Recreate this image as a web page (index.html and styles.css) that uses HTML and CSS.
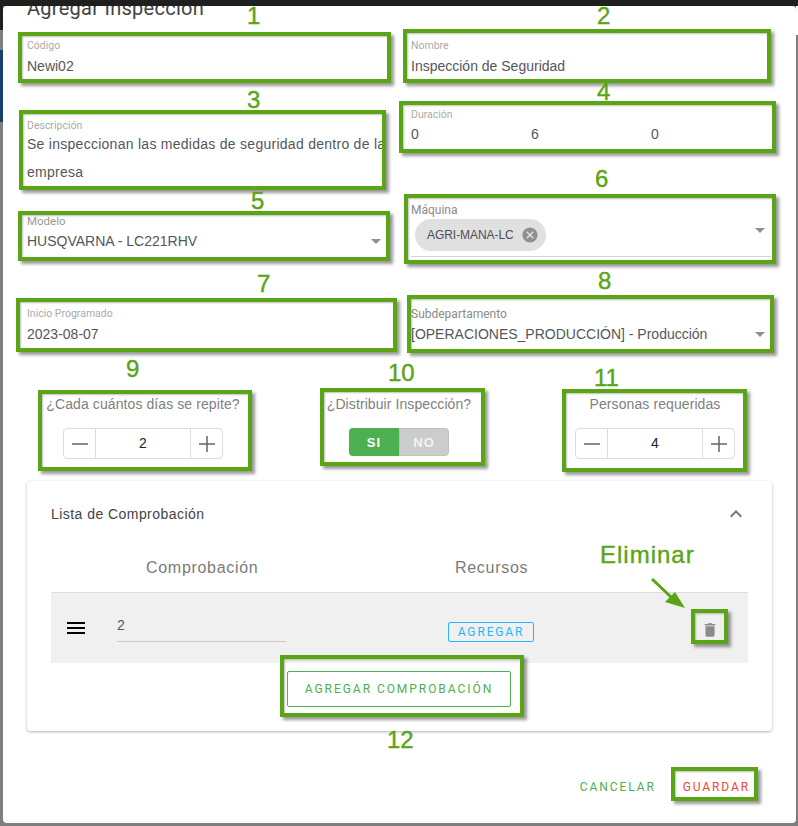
FILE: index.html
```html
<!DOCTYPE html>
<html>
<head>
    <title>Agregar Inspección</title>
    <link rel="stylesheet" href="styles.css">
</head>
<body>
    <div class="page-dark"></div>
    <div class="page-blue"></div>
    <div class="scroll-track"></div>
    <div class="dialog">
        <h2 class="dialog-title">Agregar Inspección</h2>
        <div class="form-cols">
            <div class="form-col">
                <div class="field h-code">
                    <label>Código</label>
                    <div class="value">Newi02</div>
                </div>
                <div class="field h-desc">
                    <label>Descripción</label>
                    <div class="value value-multi">Se inspeccionan las medidas de seguridad dentro de la empresa</div>
                </div>
                <div class="field h-model">
                    <label class="label-mid">Modelo</label>
                    <div class="value">HUSQVARNA - LC221RHV<span class="caret caret-abs"></span></div>
                </div>
                <div class="field h-date">
                    <label>Inicio Programado</label>
                    <div class="value">2023-08-07</div>
                </div>
            </div>
            <div class="form-col">
                <div class="field h-name">
                    <label>Nombre</label>
                    <div class="value">Inspección de Seguridad</div>
                </div>
                <div class="field h-duration">
                    <label>Duración</label>
                    <div class="duration-row">
                        <div class="value">0</div>
                        <div class="value">6</div>
                        <div class="value">0</div>
                    </div>
                </div>
                <div class="field h-machine">
                    <label class="label-dark">Máquina</label>
                    <div class="machine-row">
                        <div class="chip">
                            <span>AGRI-MANA-LC</span>
                            <svg class="chip-close" viewBox="0 0 24 24"><path d="M12 2C6.47 2 2 6.47 2 12s4.47 10 10 10 10-4.47 10-10S17.53 2 12 2zm5 13.59L15.59 17 12 13.41 8.41 17 7 15.59 10.59 12 7 8.41 8.41 7 12 10.59 15.59 7 17 8.41 13.41 12 17 15.59z"/></svg>
                        </div>
                        <span class="caret caret-machine"></span>
                    </div>
                </div>
                <div class="field h-date">
                    <label class="label-dark">Subdepartamento</label>
                    <div class="value">[OPERACIONES_PRODUCCIÓN] - Producción<span class="caret caret-abs"></span></div>
                </div>
            </div>
        </div>

        <div class="controls-row">
            <div class="control">
                <div class="control-title">¿Cada cuántos días se repite?</div>
                <div class="stepper">
                    <span class="step-btn"><svg viewBox="0 0 18 18"><path d="M1 9h16"/></svg></span>
                    <span class="step-value">2</span>
                    <span class="step-btn"><svg viewBox="0 0 18 18"><path d="M1 9h16M9 1v16"/></svg></span>
                </div>
            </div>
            <div class="control">
                <div class="control-title">¿Distribuir Inspección?</div>
                <div class="toggle">
                    <span class="toggle-on">SI</span>
                    <span class="toggle-off">NO</span>
                </div>
            </div>
            <div class="control">
                <div class="control-title">Personas requeridas</div>
                <div class="stepper">
                    <span class="step-btn"><svg viewBox="0 0 18 18"><path d="M1 9h16"/></svg></span>
                    <span class="step-value">4</span>
                    <span class="step-btn"><svg viewBox="0 0 18 18"><path d="M1 9h16M9 1v16"/></svg></span>
                </div>
            </div>
        </div>

        <div class="panel">
            <div class="panel-header">
                <span>Lista de Comprobación</span>
                <svg class="chevron" viewBox="0 0 24 24"><path d="M12 8l-6 6 1.41 1.41L12 10.83l4.59 4.58L18 14z"/></svg>
            </div>
            <div class="table-head">
                <span class="col-check">Comprobación</span>
                <span>Recursos</span>
            </div>
            <div class="table-row">
                <svg class="drag-icon" viewBox="0 0 18 14"><path d="M0 1h18v2H0zM0 6h18v2H0zM0 11h18v2H0z"/></svg>
                <div class="row-input">2</div>
                <span class="btn-add">AGREGAR</span>
                <svg class="trash-icon" viewBox="0 0 24 24"><path d="M6 19c0 1.1.9 2 2 2h8c1.1 0 2-.9 2-2V7H6v12zM19 4h-3.5l-1-1h-5l-1 1H5v2h14V4z"/></svg>
            </div>
            <div class="panel-footer">
                <span class="btn-outline">AGREGAR COMPROBACIÓN</span>
            </div>
        </div>

        <div class="dialog-actions">
            <span class="action-cancel">CANCELAR</span>
            <span class="action-save">GUARDAR</span>
        </div>
    </div>

    <!-- annotations drawn over the screenshot -->
    <div class="mark mark-1"></div>
    <div class="mark mark-2"></div>
    <div class="mark mark-3"></div>
    <div class="mark mark-4"></div>
    <div class="mark mark-5"></div>
    <div class="mark mark-6"></div>
    <div class="mark mark-7"></div>
    <div class="mark mark-8"></div>
    <div class="mark mark-9"></div>
    <div class="mark mark-10"></div>
    <div class="mark mark-11"></div>
    <div class="mark mark-12"></div>
    <div class="mark mark-del"></div>
    <div class="mark mark-save"></div>

    <span class="num num-1">1</span>
    <span class="num num-2">2</span>
    <span class="num num-3">3</span>
    <span class="num num-4">4</span>
    <span class="num num-5">5</span>
    <span class="num num-6">6</span>
    <span class="num num-7">7</span>
    <span class="num num-8">8</span>
    <span class="num num-9">9</span>
    <span class="num num-10">10</span>
    <span class="num num-11">11</span>
    <span class="num num-12">12</span>
    <span class="num num-del">Eliminar</span>
    <svg class="arrow" viewBox="0 0 40 36"><path d="M2 1L21 19"/><path class="arrow-head" d="M35 30L15 24L25 14z"/></svg>
</body>
</html>
```

FILE: styles.css
```css
* {
    box-sizing: border-box;
}
html, body {
    height: 100%;
}
body {
    margin: 0;
    padding: 6px 2px 3px 3px;
    background-color: #7f7f7f;
    font-family: "Liberation Sans", Arial, sans-serif;
    overflow: hidden;
}
.page-dark {
    position: absolute;
    left: 0;
    top: 0;
    right: 0;
    height: 6px;
    background-color: #1f1f1f;
}
.page-dark::after {
    content: "";
    position: absolute;
    left: 0;
    top: 6px;
    width: 3px;
    height: 24px;
    background-color: #1f1f1f;
}
.page-blue {
    position: absolute;
    left: 0;
    top: 50px;
    width: 3px;
    height: 72px;
    background-color: #17406e;
}
.scroll-track {
    position: absolute;
    right: 0;
    top: 6px;
    width: 2px;
    height: 29px;
    background-color: #fff;
}
.dialog {
    height: 100%;
    background-color: #fff;
    border-radius: 4px;
    padding: 0 25px 0 24px;
    overflow: hidden;
}
.dialog-title {
    margin: -10px 0 0;
    font-family: Roboto, Arial, sans-serif;
    font-size: 20px;
    font-weight: 400;
    line-height: 24px;
    color: #444;
    letter-spacing: .27px;
}
.form-cols {
    display: flex;
    gap: 24px;
    margin-top: 19px;
}
.form-col {
    width: 360px;
}
.field {
    overflow: hidden;
}
.h-code { height: 80px; }
.h-desc { height: 95px; }
.h-model { height: 93px; }
.h-date { height: 87px; }
.h-name { height: 69px; }
.h-duration { height: 95px; }
.h-machine { height: 104px; }
label {
    display: block;
    padding-top: 1px;
    font-family: Roboto, Arial, sans-serif;
    font-size: 10.5px;
    line-height: 12px;
    color: #aaa;
}
.label-mid {
    margin-bottom: 1px;
    font-size: 11.5px;
    color: #999;
}
.label-dark {
    font-size: 12px;
    color: #8a8a8a;
}
.value {
    position: relative;
    margin-top: 4px;
    font-size: 14px;
    line-height: 20px;
    color: #53575c;
}
.value-multi {
    margin-top: -2px;
    line-height: 28px;
    letter-spacing: .27px;
}
.duration-row {
    display: grid;
    grid-template-columns: repeat(3, 120px);
}
.duration-row .value {
    margin-top: 3px;
}
.caret {
    width: 0;
    height: 0;
    border-left: 5px solid transparent;
    border-right: 5px solid transparent;
    border-top: 5px solid #8f8f8f;
}
.caret-abs {
    position: absolute;
    right: 6px;
    top: 8px;
}
.machine-row {
    display: flex;
    justify-content: space-between;
    height: 40px;
    margin-top: 1px;
    padding: 2px 6px 0 4px;
    border-bottom: 1px solid #d5d5d5;
}
.caret-machine {
    margin-top: 9px;
}
.chip {
    display: flex;
    align-items: center;
    height: 32px;
    padding: 0 7px 0 12px;
    gap: 7px;
    background-color: #e0e0e0;
    border-radius: 16px;
    font-size: 12px;
    letter-spacing: -.05px;
    color: #4a4f55;
}
.chip-close {
    width: 18px;
    height: 18px;
    fill: #909090;
}
.controls-row {
    display: grid;
    grid-template-columns: repeat(3, 1fr);
    margin: 0 -12px;
}
.control {
    display: flex;
    flex-direction: column;
    align-items: center;
    height: 65px;
}
.control-title {
    font-size: 14px;
    line-height: 20px;
    color: #808080;
    letter-spacing: .09px;
}
.stepper {
    display: flex;
    width: 160px;
    height: 31px;
    margin-top: 14px;
    border: 1px solid #ddd;
    border-radius: 4px;
}
.step-btn {
    display: flex;
    align-items: center;
    justify-content: center;
    width: 31px;
}
.step-btn svg {
    width: 18px;
    height: 18px;
    fill: none;
    stroke: #666;
    stroke-width: 1.5;
}
.step-value {
    flex: 1;
    text-align: center;
    border-left: 1px solid #ddd;
    border-right: 1px solid #ddd;
    font-size: 14px;
    line-height: 29px;
    color: #222;
}
.toggle {
    display: flex;
    margin-top: 14px;
    font-size: 13px;
    font-weight: 700;
    letter-spacing: 1px;
    color: #fff;
}
.toggle span {
    display: flex;
    align-items: center;
    justify-content: center;
    width: 50px;
    height: 28px;
}
.toggle-on {
    background-color: #4caf50;
    border-radius: 4px 0 0 4px;
}
.toggle-off {
    background-color: #ccc;
    color: #f2f2f2;
    border-radius: 0 4px 4px 0;
    border: 1px solid #c0c0c0;
}
.panel {
    height: 250px;
    margin: 22px -1px 0 0;
    padding: 0 24px;
    background-color: #fff;
    border-radius: 4px;
    box-shadow: 0 1px 3px rgba(0, 0, 0, .3);
}
.panel-header {
    display: flex;
    align-items: center;
    justify-content: space-between;
    height: 64px;
    padding-top: 2px;
    font-size: 14px;
    letter-spacing: .45px;
    color: #444;
}
.chevron {
    width: 24px;
    height: 24px;
    fill: #777;
}
.table-head {
    display: flex;
    height: 47px;
    padding: 13px 0 0 95px;
    font-size: 16px;
    line-height: 19px;
    color: #7b7b7b;
    letter-spacing: .7px;
}
.col-check {
    width: 309px;
}
.table-row {
    display: flex;
    align-items: center;
    height: 71px;
    padding-left: 16px;
    background-color: #f0f0f0;
    border-top: 1px solid #ddd;
}
.drag-icon {
    width: 18px;
    height: 14px;
    fill: #000;
}
.row-input {
    width: 169px;
    height: 25px;
    margin: 2px 0 0 32px;
    border-bottom: 1px solid #ccc;
    font-size: 14px;
    line-height: 16px;
    color: #53575c;
}
.btn-add {
    width: 86px;
    height: 20px;
    margin: 8px 0 0 162px;
    border: 1px solid #29b6f6;
    border-radius: 2px;
    font-family: Roboto, Arial, sans-serif;
    font-size: 12px;
    line-height: 18px;
    text-align: center;
    letter-spacing: 1.85px;
    color: #29b6f6;
}
.trash-icon {
    width: 18px;
    height: 18px;
    margin: 3px 0 0 167px;
    fill: #8a8a8a;
}
.panel-footer {
    display: flex;
    justify-content: center;
    padding: 8px 1px 0 0;
}
.btn-outline {
    width: 224px;
    height: 36px;
    border: 1px solid #4caf50;
    border-radius: 2px;
    font-family: Roboto, Arial, sans-serif;
    font-size: 12px;
    line-height: 34px;
    text-align: center;
    letter-spacing: 1.95px;
    color: #4caf50;
}
.dialog-actions {
    display: flex;
    justify-content: flex-end;
    gap: 27px;
    margin-top: 48px;
    padding-right: 21px;
    font-family: Roboto, Arial, sans-serif;
    font-size: 12px;
    line-height: 16px;
    letter-spacing: 1.9px;
}
.action-cancel {
    color: #4caf50;
}
.action-save {
    color: #f44336;
}
.mark {
    position: absolute;
    border: 4px solid #5aa516;
    box-shadow: 3px 3px 3px rgba(0, 0, 0, .4), inset 1px 1px 2px rgba(0, 0, 0, .25);
}
.mark-1 { left: 18px; top: 32px; width: 373px; height: 51px; }
.mark-2 { left: 403px; top: 29px; width: 368px; height: 54px; }
.mark-3 { left: 19px; top: 110px; width: 367px; height: 80px; }
.mark-4 { left: 399px; top: 101px; width: 377px; height: 52px; }
.mark-5 { left: 18px; top: 211px; width: 372px; height: 50px; }
.mark-6 { left: 404px; top: 194px; width: 372px; height: 70px; }
.mark-7 { left: 16px; top: 298px; width: 381px; height: 54px; }
.mark-8 { left: 407px; top: 295px; width: 367px; height: 58px; }
.mark-9 { left: 38px; top: 390px; width: 214px; height: 81px; }
.mark-10 { left: 320px; top: 388px; width: 165px; height: 78px; }
.mark-11 { left: 562px; top: 389px; width: 185px; height: 83px; }
.mark-12 { left: 280px; top: 655px; width: 244px; height: 62px; }
.mark-del { left: 691px; top: 609px; width: 37px; height: 35px; }
.mark-save { left: 671px; top: 767px; width: 87px; height: 34px; }
.num {
    position: absolute;
    font-size: 24px;
    line-height: 28px;
    color: #5aa516;
    -webkit-text-stroke: .4px #5aa516;
}
.num-1 { left: 247px; top: 2px; }
.num-2 { left: 597px; top: 2px; }
.num-3 { left: 247px; top: 86px; }
.num-4 { left: 597px; top: 78px; }
.num-5 { left: 251px; top: 187px; }
.num-6 { left: 595px; top: 165px; }
.num-7 { left: 257px; top: 270px; }
.num-8 { left: 598px; top: 267px; }
.num-9 { left: 126px; top: 355px; }
.num-10 { left: 388px; top: 359px; }
.num-11 { left: 594px; top: 364px; }
.num-12 { left: 387px; top: 726px; }
.num-del { left: 600px; top: 541px; letter-spacing: 1px; }
.arrow {
    position: absolute;
    left: 650px;
    top: 578px;
    width: 40px;
    height: 36px;
}
.arrow path {
    stroke: #5aa516;
    stroke-width: 3;
    fill: none;
}
.arrow .arrow-head {
    stroke: none;
    fill: #5aa516;
}
```
